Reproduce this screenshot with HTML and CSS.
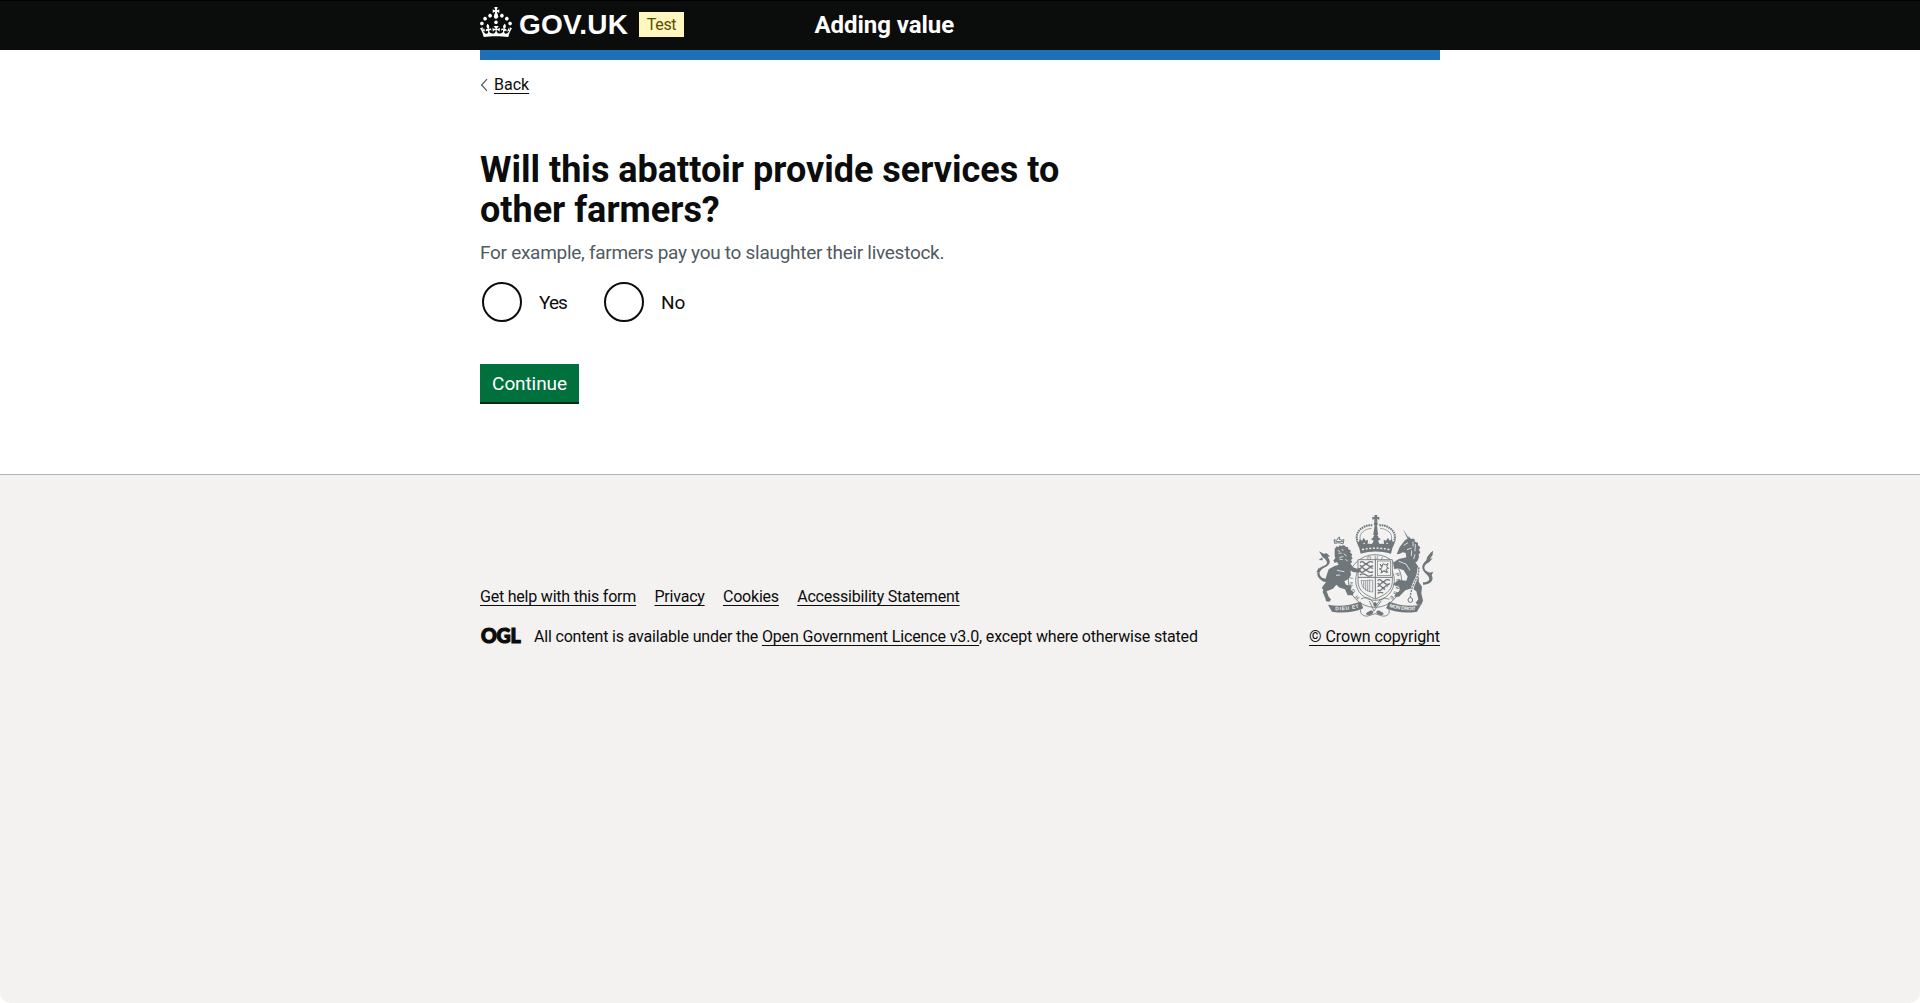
FILE: index.html
```html
<!DOCTYPE html>
<html lang="en">
<head>
<meta charset="utf-8">
<title>Will this abattoir provide services to other farmers?</title>
<link rel="stylesheet" href="styles.css">
</head>
<body>
<header class="header">
  <div class="container header-row">
    <div class="header-logo">
      <svg class="crown" viewBox="0 0 32 30" width="32" height="30" aria-hidden="true"><path d="M22.6 10.4c-1 .4-2-.1-2.4-1-.4-.9.1-2 1-2.4.9-.4 2 .1 2.4 1s-.1 2-1 2.4m-5.9 6.7c-.9.4-2-.1-2.4-1-.4-.9.1-2 1-2.4.9-.4 2 .1 2.4 1s-.1 2-1 2.4m10.8-3.7c-1 .4-2-.1-2.4-1-.4-.9.1-2 1-2.4.9-.4 2 .1 2.4 1s0 2-1 2.4m3.3 4.8c-1 .4-2-.1-2.4-1-.4-.9.1-2 1-2.4.9-.4 2 .1 2.4 1s-.1 2-1 2.4M17 4.7l2.3 1.2V2.5l-2.3.7-.2-.2.9-3h-3.4l.9 3-.2.2c-.1.1-2.3-.7-2.3-.7v3.4L15 4.7c.1.1.1.2.2.2l-1.3 4c-.1.2-.1.4-.1.6 0 1.1.8 2 1.9 2.2h.7c1-.2 1.9-1.1 1.9-2.1 0-.2 0-.4-.1-.6l-1.3-4c-.1-.2 0-.2.1-.3m-7.6 5.7c.9.4 2-.1 2.4-1 .4-.9-.1-2-1-2.4-.9-.4-2 .1-2.4 1s0 2 1 2.4m-5 3c.9.4 2-.1 2.4-1 .4-.9-.1-2-1-2.4-.9-.4-2 .1-2.4 1s.1 2 1 2.4m-3.2 4.8c.9.4 2-.1 2.4-1 .4-.9-.1-2-1-2.4-.9-.4-2 .1-2.4 1s0 2 1 2.4m14.8 11c4.4 0 8.6.3 12.3.8 1.1-4.5 2.4-7 3.7-8.8l-2.5-.9c.2 1.3.3 1.9 0 2.7-.4-.4-.8-1.1-1.1-2.3l-1.2 4c.7-.5 1.3-.8 2-.9-1.1 2.5-2.6 3.1-3.5 3-1.1-.2-1.7-1.2-1.5-2.1.3-1.2 1.5-1.5 2.1-.1 1.1-2.3-.8-3-2-2.3 1.9-1.9 2.1-3.5.6-5.6-2.1 1.6-2.1 3.2-1.2 5.5-1.2-1.4-3.2-.6-2.5 1.6.9-1.4 2.1-.5 1.9.8-.2 1.1-1.7 2.1-3.5 1.9-2.7-.2-2.9-2.1-2.9-3.6.7-.1 1.9.5 2.9 1.9l.4-4.3c-1.1 1.1-2.1 1.4-3.2 1.4.4-1.2 2.1-3 2.1-3h-5.4s1.7 1.9 2.1 3c-1.1 0-2.1-.2-3.2-1.4l.4 4.3c1-1.4 2.2-2 2.9-1.9-.1 1.5-.2 3.4-2.9 3.6-1.9.2-3.4-.8-3.5-1.9-.2-1.3 1-2.2 1.9-.8.7-2.3-1.2-3-2.5-1.6.9-2.2.9-3.9-1.2-5.5-1.5 2-1.3 3.7.6 5.6-1.2-.7-3.1 0-2 2.3.6-1.4 1.8-1.1 2.1.1.2.9-.3 1.9-1.5 2.1-.9.2-2.4-.5-3.5-3 .6 0 1.2.3 2 .9l-1.2-4c-.3 1.1-.7 1.9-1.1 2.3-.3-.8-.2-1.4 0-2.7l-2.9.9C1.3 23 2.6 25.5 3.7 30c3.7-.5 7.9-.8 12.3-.8" fill="currentColor"/></svg>
      <span class="wordmark">GOV.UK</span>
      <span class="tag">Test</span>
    </div>
    <span class="service-name">Adding value</span>
  </div>
</header>
<div class="container">
  <div class="blue-bar"></div>
  <a class="back-link"><svg width="8" height="14" viewBox="0 0 8 14" fill="none" stroke="#505a5f" stroke-width="1.2"><path d="M7 1.2 1.6 7 7 12.8"/></svg><span class="link">Back</span></a>
  <main class="main">
    <h1 class="heading">Will this abattoir provide services to other farmers?</h1>
    <p class="hint">For example, farmers pay you to slaughter their livestock.</p>
    <div class="radios">
      <label class="radio"><span class="radio-ring"></span><span class="radio-label">Yes</span></label>
      <label class="radio"><span class="radio-ring"></span><span class="radio-label">No</span></label>
    </div>
    <button class="button">Continue</button>
  </main>
</div>
<footer class="footer">
  <div class="container footer-row">
    <div class="footer-meta">
      <nav class="footer-links">
        <a class="link">Get help with this form</a>
        <a class="link">Privacy</a>
        <a class="link">Cookies</a>
        <a class="link">Accessibility Statement</a>
      </nav>
      <div class="licence">
        <svg class="ogl" width="41" height="20" viewBox="0 0 41 20" role="img" aria-label="OGL"><text x="1" y="15.600" textLength="39.500" lengthAdjust="spacingAndGlyphs">OGL</text></svg>
        <span class="licence-text">All content is available under the <a class="link licence-link">Open Government Licence v3.0</a>, except where otherwise stated</span>
      </div>
    </div>
    <div class="copyright">
      <svg class="crest" width="118" height="102" viewBox="48 45 354 306" aria-hidden="true">
        <!-- crown -->
        <g fill="currentColor">
          <path d="M223 45h9l-1 7 7-2v9l-7-2 2 8h-11l2-8-7 2v-9l7 2z"/>
          <circle cx="227.500" cy="71" r="6"/>
          <path d="M224 76h7l3 27-7 10-7-10z"/>
          <path d="M176 137c35-10 68-10 103 0l-6 24c-32-9-60-9-91 0z"/>
          <path d="m176 141-8-20 9 5 2-9 7 5 5-9 6 9 7-3-1 13 14-1 4-9-9-5 7-3 2-7h13l2 7 7 3-9 5 4 9 14 1-1-13 7 3 6-9 5 9 7-5 2 9 9-5-8 20c-35-10-68-10-103 0z"/>
        </g>
        <g fill="none" stroke="currentColor">
          <path d="M172 121c-10-27 22-49 47-45M283 121c10-27-22-49-47-45" stroke-width="6" stroke-dasharray="5 2"/>
          <path d="M181 119c-5-19 12-32 34-34M274 119c5-19-12-32-34-34" stroke-width="2"/>
          <path d="M186 149c28-6 55-6 83 0" stroke="#f3f2f1" stroke-width="4" stroke-dasharray="6 5"/>
          <path d="M190 130h5m14 0h7m22 0h7m14 0h5" stroke="#f3f2f1" stroke-width="3"/>
        </g>
        <!-- garter and its motto -->
        <g fill="none" stroke="currentColor">
          <ellipse cx="225" cy="243" rx="80" ry="79" stroke-width="2.500"/>
          <ellipse cx="225" cy="241" rx="58" ry="60" stroke-width="2.500"/>
        </g>
        <path id="garter" d="M194 303A66 66 0 1 1 254 303" fill="none"/>
        <g class="motto-ring">
          <text><textPath href="#garter" startOffset="18" textLength="66">HONI</textPath></text>
          <text><textPath href="#garter" startOffset="154" textLength="44">QUI</textPath></text>
          <text><textPath href="#garter" startOffset="255" textLength="80">PENSE</textPath></text>
        </g>
        <!-- quartered shield -->
        <path d="M174 179h103v65c0 30-25 42-51 53-27-11-52-23-52-53z" fill="#f3f2f1" stroke="currentColor" stroke-width="2.500"/>
        <path d="M226 178v118M174 232h103" stroke="currentColor" stroke-width="3"/>
        <g fill="none" stroke="currentColor">
          <path d="M180 188q6-6 12 0t12 0 15-1M180 196q6 6 12 0t12 0 15 1M180 206q6-6 12 0t12 0 15-1M180 214q6 6 12 0t12 0 15 1M180 225q8-7 18 0t20-1" stroke-width="4"/>
          <rect x="232" y="183" width="40" height="43" stroke-width="2"/>
          <path d="M240 192l7 7 2-8 9 4 6-5-4 11 6 4-8 3 5 9-11-5-8 7 1-9-7-3 8-3zM242 218l9-5 10 5" stroke-width="3"/>
          <path d="M184 241c9 4 24-3 34 0v35c-19-1-34-12-34-34zM191 244v21m6-21v27m6-29v32m6-33v34" stroke-width="2"/>
          <path d="M233 242q6-6 11 0t11 0 15-1M233 250q6 6 11 0t11 0 15 1M233 260q6-6 11 0t11 0 9-1M233 269q6 6 11 0t11 0 M233 280q7-5 17-1" stroke-width="4"/>
        </g>
        <!-- lion -->
        <g fill="currentColor">
          <path d="m104 147 6-8 5 2 4-5 6 2 7-3 6 6 6 0 1 7 7 3-1 7 6 5-3 6 4 6-5 5 4 7-6 3 8 12 12 4 8-3 4 8-6 7-18-2-9-6 3 15-9 13-11 6 5 10 17 4-3 13 9 5-2 10h-16l-8-18-16-5-10-9-10 12-19 8 6 16 7 8-4 7-11-1-2-9-8-19 2-8-5-3 4-7 10-13-2-10 9-27 16-9 14-5-5-8-7 3-4-8 6-6-2-8z"/>
          <path d="m104 130-2-11 8 2 6-9 7 9 9-2-3 13-12-4z" fill="none" stroke="currentColor" stroke-width="3"/>
          <path d="M118 110v10M106 125h24" stroke="currentColor" stroke-width="3"/>
          <path d="M85 247l-14-2C43 231 49 207 68 199c14-6 17-10 7-22l-8-7-10-16 14 7 9-1 10 9-7 2c12 15 5 24-8 31-15 7-23 20-9 31l24 7zM68 181l-12-1 11-8zM49 217l8-15 3 14z"/>
        </g>
        <path d="M113 151l7 4m5-8 5 6m-15 7 10-1m6 2 9 7m-22 4 12-2m-12 7 10 2m8-1 7 5M111 211l22 4m-25 11 13-1" stroke="#f3f2f1" stroke-width="2.500" fill="none"/>
        <!-- unicorn -->
        <g fill="currentColor">
          <path d="m309 86 19 32-4 2z"/>
          <path d="m299 141 17-22 9-3 1-8 6 8 11 0 2 9 9 3 0 8 7 6-4 7 4 9-5 5 1 9-5 12-13 7-26-6 6-14-2-12-9-2-8 4-10 2z"/>
          <path d="m279 188 17-11 24-5 20 6 14 21 3 24-1 22 10 15-2 20 5 22-5 12-11 1-6-7 8-10-6-24-13-9-20 6-19 19-14 0 4-10 14-8-5-16-7 3-10-6 17-13 23 2 4-12-12-19-17-6-11 3z"/>
          <path d="M369 247c22 0 24-13 9-26-13-11-16-24-2-37 6-5 2-9 8-16l7-9 8-7-1 13-8 11 8-1-10 11c-14 8-20 15-10 27l12 5 10-3-5 10c8 16-3 30-26 29z"/>
        </g>
        <path d="M311 136l13-8m-3 21 14-5m4-19v14m7-7-1 22m-10-3-1 17m11-5-4 14m-45 7 22 8 12 19" stroke="#f3f2f1" stroke-width="2.500" fill="none"/>
        <path d="M356 202c2 25-9 35-16 53-5 13-8 20-9 37" fill="none" stroke="#f3f2f1" stroke-width="8"/>
        <path d="M356 202c2 25-9 35-16 53-5 13-8 20-9 37" fill="none" stroke="currentColor" stroke-width="4" stroke-dasharray="6 3"/>
        <circle cx="331" cy="300" r="7" fill="none" stroke="currentColor" stroke-width="3"/>
        <!-- motto scroll -->
        <path d="M84 314c37 7 67 1 98-9l8 20c-30 13-62 15-94 10zM363 314c-36 7-66 1-96-9l-9 20c31 13 62 15 93 10z" fill="currentColor"/>
        <path id="scroll-left" d="M106 331q37 1 74-9" fill="none"/>
        <path id="scroll-right" d="M268 321q38 12 84 9" fill="none"/>
        <text class="motto"><textPath href="#scroll-left" textLength="72">DIEU ET</textPath></text>
        <text class="motto"><textPath href="#scroll-right" textLength="80">MON DROIT</textPath></text>
        <path d="M183 297q18-10 32 4l11 19 14-20q15-10 28-2M182 328c-3 15 10 22 22 20l21-7 22 7c14 2 25-6 19-22M208 303l14 30 22-31" fill="none" stroke="currentColor" stroke-width="2.500"/>
        <path d="M205 335c8-6 16-3 15 2s-9 10-17 8-6-6 2-10zM244 335c-8-6-15-3-15 2s9 10 17 8 6-6-2-10zM219 313l6-8 7 8-7 9z" fill="currentColor"/>
      </svg>
      <a class="link copyright-link">© Crown copyright</a>
    </div>
  </div>
</footer>
</body>
</html>
```
FILE: styles.css
```css
* {
  box-sizing: border-box;
}

body {
  margin: 0;
  min-height: 1003px;
  display: flex;
  flex-direction: column;
  background: #fff;
  color: #0b0c0c;
  font: 16px/20px Roboto, Arial, sans-serif;
}

.container {
  width: 960px;
  margin: 0 auto;
}

.header {
  height: 50px;
  background: #0b0c0c;
  border-top: 1px solid #000;
  color: #fff;
}

.header-row {
  display: flex;
  height: 49px;
}

.header-logo {
  display: flex;
  align-items: flex-start;
  width: 334.5px;
  padding-top: 6px;
}

.wordmark {
  margin: 3px 0 0 7px;
  width: 120px;
  font: bold 28px/30px "Liberation Sans", Arial, sans-serif;
  letter-spacing: 0.2px;
}

.tag {
  width: 45px;
  height: 25px;
  margin-top: 5px;
  background: #fff7bf;
  color: #594d00;
  line-height: 25px;
  text-align: center;
  letter-spacing: -0.3px;
}

.service-name {
  padding-top: 9px;
  font-size: 24px;
  line-height: 30px;
  font-weight: 700;
  letter-spacing: -0.05px;
}

.blue-bar {
  height: 10px;
  background: #1d70b8;
}

.back-link {
  display: flex;
  align-items: center;
  gap: 6px;
  margin-top: 15px;
}

.link {
  text-decoration: underline;
  text-decoration-thickness: 1px;
  text-underline-offset: 2.5px;
}

.main {
  padding: 55px 0 72px;
}

.heading {
  width: 640px;
  margin: 0 0 10px;
  font-size: 36px;
  line-height: 40px;
  font-weight: 700;
}

.hint {
  margin: 0 0 15px;
  color: #505a5f;
  font-size: 19px;
  line-height: 25px;
  letter-spacing: -0.285px;
}

.radios {
  display: flex;
  gap: 35px;
  margin-bottom: 40px;
}

.radio {
  display: flex;
  align-items: center;
  height: 44px;
  padding-left: 2px;
  font-size: 19px;
  line-height: 25px;
}

.radio-ring {
  width: 40px;
  height: 40px;
  margin-right: 17px;
  border: 2px solid #0b0c0c;
  border-radius: 50%;
}

.radio-label {
  letter-spacing: -0.9px;
}

.radio + .radio .radio-label {
  letter-spacing: 0;
}

.button {
  display: block;
  width: 99px;
  height: 38px;
  padding: 8px 0 7px;
  border: 2px solid transparent;
  background: #00703c;
  box-shadow: 0 2px 0 #002d18;
  color: #fff;
  font: 19px/19px Roboto, Arial, sans-serif;
  letter-spacing: -0.1px;
}

.footer {
  flex: 1;
  padding-top: 40px;
  border-top: 1px solid #b1b4b6;
  border-radius: 0 0 10px 10px;
  background: #f3f2f1;
}

.footer-row {
  display: flex;
  justify-content: space-between;
  align-items: flex-end;
}

.footer-meta {
  display: flex;
  flex-direction: column;
  gap: 20px;
  letter-spacing: -0.21px;
}

.footer-links {
  display: flex;
  gap: 18.3px;
}

.licence {
  display: flex;
  gap: 13px;
}

.licence-text {
  letter-spacing: -0.18px;
}

.licence-link {
  letter-spacing: -0.14px;
}

.ogl {
  overflow: visible;
  font: 900 20px Lato, sans-serif;
  fill: #0b0c0c;
  stroke: #0b0c0c;
  stroke-width: 1.2px;
}

.copyright {
  display: flex;
  flex-direction: column;
  align-items: center;
  gap: 10px;
}

.copyright-link {
  letter-spacing: -0.09px;
}

.crest {
  display: block;
  color: #6f777b;
}

.motto-ring {
  font: 700 16px "Liberation Sans", Arial, sans-serif;
  fill: #7f878a;
}

.motto {
  font: 700 15px "Liberation Sans", Arial, sans-serif;
  fill: #f3f2f1;
}
```
